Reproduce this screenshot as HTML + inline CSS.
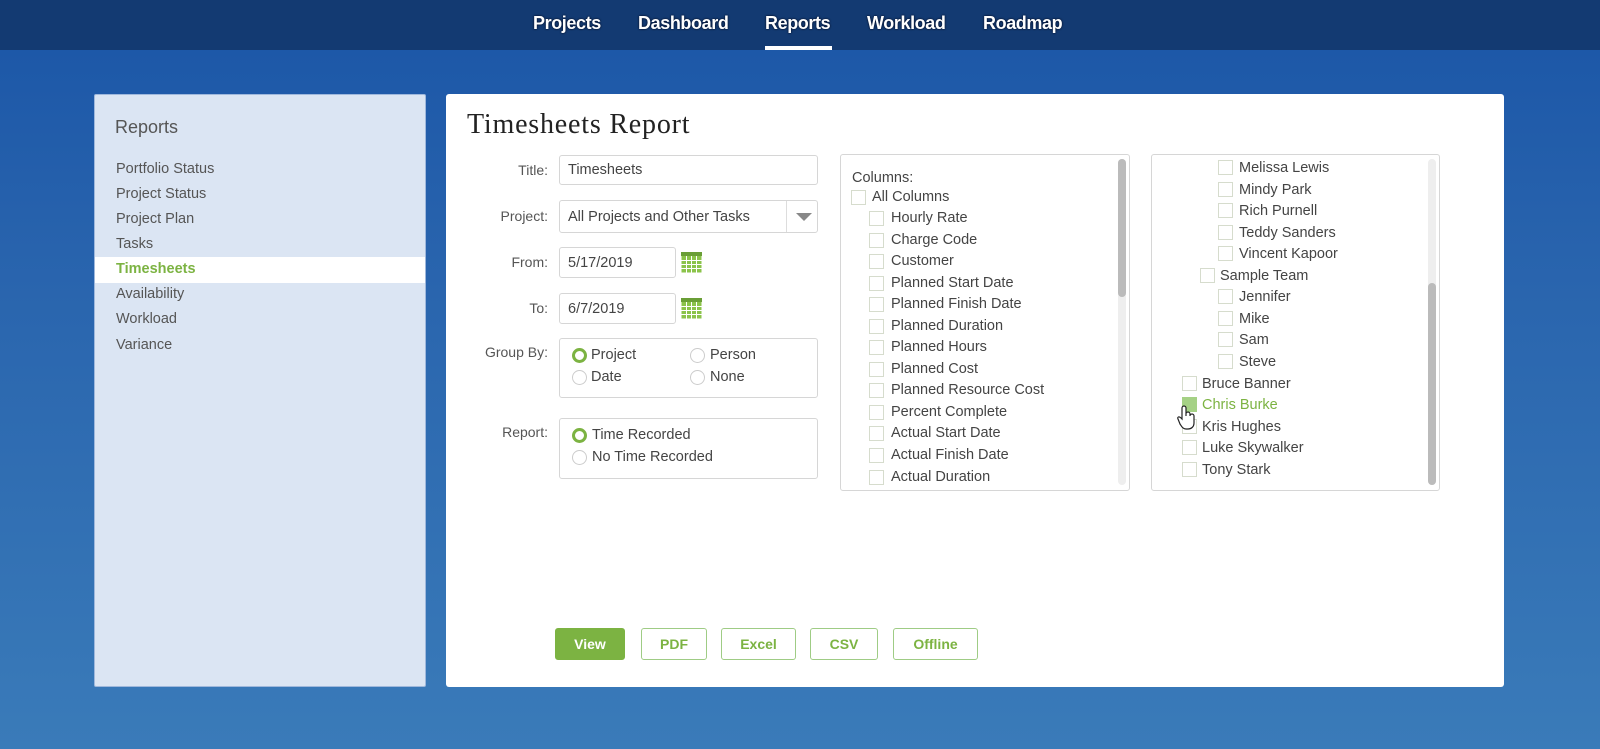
<!DOCTYPE html>
<html><head><meta charset="utf-8"><style>
*{margin:0;padding:0;box-sizing:border-box}
body{width:1600px;height:749px;overflow:hidden;position:relative;font-family:"Liberation Sans",sans-serif;background:linear-gradient(180deg,#1d58a8 50px,#2863ad 250px,#3a7bb9 749px);color:#555}
.a{position:absolute;white-space:nowrap}
.nav{position:absolute;left:0;top:0;width:1600px;height:50px;background:#133a72}
.nv{position:absolute;top:13px;color:#fff;font-weight:bold;font-size:18px;letter-spacing:-0.4px;text-shadow:0 0 2px #001}
.side{position:absolute;left:94px;top:94px;width:332px;height:593px;background:#dbe5f3;border:1px solid #9fb8dc;border-radius:2px}
.si{position:absolute;left:21px;font-size:14.5px;color:#555}
.main{position:absolute;left:446px;top:94px;width:1058px;height:593px;background:#fff;border-radius:3px}
.lbl{position:absolute;right:0;font-size:14px;color:#555;text-align:right}
.box{position:absolute;border:1px solid #d6d6d6;border-radius:3px;background:#fff}
.t{font-size:14.5px;color:#444}
.cb{position:absolute;width:15px;height:15px;border:1px solid #d6dccd;background:#fff}
.rd{position:absolute;width:15px;height:15px;border-radius:50%;border:1px solid #ccc}
.rd.on{border:3px solid #7cb342}
.btn{position:absolute;top:628px;height:32px;border:1px solid #9fcc85;border-radius:3px;color:#7cb342;font-weight:bold;font-size:14px;text-align:center;line-height:30px;background:#fff}
</style></head><body>
<div class="nav"></div>
<div class="nv" style="left:533px">Projects</div>
<div class="nv" style="left:638px">Dashboard</div>
<div class="nv" style="left:765px">Reports</div>
<div class="nv" style="left:867px">Workload</div>
<div class="nv" style="left:983px">Roadmap</div>
<div class="a" style="left:765px;top:46px;width:67px;height:4px;background:#fff"></div>

<div class="side">
<div class="a" style="left:20px;top:22px;font-size:18px;color:#555">Reports</div>
<div class="si" style="top:66px">Portfolio Status</div>
<div class="si" style="top:91px">Project Status</div>
<div class="si" style="top:116px">Project Plan</div>
<div class="si" style="top:141px">Tasks</div>
<div class="a" style="left:0;top:162px;width:330px;height:26px;background:#fff"></div>
<div class="si" style="top:166px;color:#7cb342;font-weight:bold">Timesheets</div>
<div class="si" style="top:191px">Availability</div>
<div class="si" style="top:216px">Workload</div>
<div class="si" style="top:242px">Variance</div>
</div>

<div class="main"></div>
<div class="a" style="left:467px;top:109px;font-family:'Liberation Serif',serif;font-size:28px;letter-spacing:0.8px;color:#222">Timesheets Report</div>

<div class="a" style="left:440px;top:0;width:108px;height:600px">
<div class="lbl" style="top:162px">Title:</div>
<div class="lbl" style="top:208px">Project:</div>
<div class="lbl" style="top:254px">From:</div>
<div class="lbl" style="top:300px">To:</div>
<div class="lbl" style="top:344px">Group By:</div>
<div class="lbl" style="top:424px">Report:</div>
</div>
<div class="box" style="left:559px;top:155px;width:259px;height:30px"><span class="a t" style="left:8px;top:6px">Timesheets</span></div>
<div class="box" style="left:559px;top:200px;width:259px;height:33px"><span class="a t" style="left:8px;top:8px">All Projects and Other Tasks</span>
<div class="a" style="left:226px;top:0;width:1px;height:31px;background:#ddd"></div>
<div class="a" style="left:236px;top:12px;border-left:8px solid transparent;border-right:8px solid transparent;border-top:8px solid #888"></div></div>
<div class="box" style="left:559px;top:247px;width:117px;height:31px"><span class="a t" style="left:8px;top:7px">5/17/2019</span></div>
<div class="box" style="left:559px;top:293px;width:117px;height:31px"><span class="a t" style="left:8px;top:7px">6/7/2019</span></div>
<svg class="a" style="left:681px;top:252px" width="21" height="21"><rect x="0.5" y="0.5" width="20" height="20" fill="#8bc34a"/><rect x="0" y="0" width="21" height="4" fill="#6a9e36"/><g stroke="#fff" stroke-width="1"><path d="M5.5 4V21M10.5 4V21M15.5 4V21M0 8.5H21M0 12.5H21M0 16.5H21"/></g></svg>
<svg class="a" style="left:681px;top:298px" width="21" height="21"><rect x="0.5" y="0.5" width="20" height="20" fill="#8bc34a"/><rect x="0" y="0" width="21" height="4" fill="#6a9e36"/><g stroke="#fff" stroke-width="1"><path d="M5.5 4V21M10.5 4V21M15.5 4V21M0 8.5H21M0 12.5H21M0 16.5H21"/></g></svg>

<div class="box" style="left:559px;top:338px;width:259px;height:60px"></div>
<div class="rd on" style="left:572px;top:348px"></div><span class="a t" style="left:591px;top:347px">Project</span>
<div class="rd" style="left:690px;top:348px"></div><span class="a t" style="left:710px;top:347px">Person</span>
<div class="rd" style="left:572px;top:370px"></div><span class="a t" style="left:591px;top:369px">Date</span>
<div class="rd" style="left:690px;top:370px"></div><span class="a t" style="left:710px;top:369px">None</span>

<div class="box" style="left:559px;top:418px;width:259px;height:61px"></div>
<div class="rd on" style="left:572px;top:428px"></div><span class="a t" style="left:592px;top:427px">Time Recorded</span>
<div class="rd" style="left:572px;top:450px"></div><span class="a t" style="left:592px;top:449px">No Time Recorded</span>

<div class="box" style="left:840px;top:154px;width:290px;height:337px;overflow:hidden">
<div class="a" style="left:277px;top:4px;width:8px;height:326px;background:#eee;border-radius:4px"></div>
<div class="a" style="left:277px;top:4px;width:8px;height:138px;background:#bbb;border-radius:4px"></div>
<span class="a t" style="left:11px;top:15px">Columns:</span>
<div class="cb" style="left:10px;top:35px"></div><span class="a t" style="left:31px;top:34px">All Columns</span>
</div>
<div class="a" style="left:0;top:0">
<div class="cb" style="left:869px;top:211px"></div><span class="a t" style="left:891px;top:210px">Hourly Rate</span>
<div class="cb" style="left:869px;top:233px"></div><span class="a t" style="left:891px;top:232px">Charge Code</span>
<div class="cb" style="left:869px;top:254px"></div><span class="a t" style="left:891px;top:253px">Customer</span>
<div class="cb" style="left:869px;top:276px"></div><span class="a t" style="left:891px;top:275px">Planned Start Date</span>
<div class="cb" style="left:869px;top:297px"></div><span class="a t" style="left:891px;top:296px">Planned Finish Date</span>
<div class="cb" style="left:869px;top:319px"></div><span class="a t" style="left:891px;top:318px">Planned Duration</span>
<div class="cb" style="left:869px;top:340px"></div><span class="a t" style="left:891px;top:339px">Planned Hours</span>
<div class="cb" style="left:869px;top:362px"></div><span class="a t" style="left:891px;top:361px">Planned Cost</span>
<div class="cb" style="left:869px;top:383px"></div><span class="a t" style="left:891px;top:382px">Planned Resource Cost</span>
<div class="cb" style="left:869px;top:405px"></div><span class="a t" style="left:891px;top:404px">Percent Complete</span>
<div class="cb" style="left:869px;top:426px"></div><span class="a t" style="left:891px;top:425px">Actual Start Date</span>
<div class="cb" style="left:869px;top:448px"></div><span class="a t" style="left:891px;top:447px">Actual Finish Date</span>
<div class="cb" style="left:869px;top:470px"></div><span class="a t" style="left:891px;top:469px">Actual Duration</span>
</div>

<div class="box" style="left:1151px;top:154px;width:289px;height:337px">
<div class="a" style="left:276px;top:4px;width:8px;height:326px;background:#eee;border-radius:4px"></div>
<div class="a" style="left:276px;top:128px;width:8px;height:202px;background:#bbb;border-radius:4px"></div>
</div>
<div class="cb" style="left:1218px;top:160px"></div><span class="a t" style="left:1239px;top:160px">Melissa Lewis</span>
<div class="cb" style="left:1218px;top:182px"></div><span class="a t" style="left:1239px;top:182px">Mindy Park</span>
<div class="cb" style="left:1218px;top:203px"></div><span class="a t" style="left:1239px;top:203px">Rich Purnell</span>
<div class="cb" style="left:1218px;top:225px"></div><span class="a t" style="left:1239px;top:225px">Teddy Sanders</span>
<div class="cb" style="left:1218px;top:246px"></div><span class="a t" style="left:1239px;top:246px">Vincent Kapoor</span>
<div class="cb" style="left:1200px;top:268px"></div><span class="a t" style="left:1220px;top:268px">Sample Team</span>
<div class="cb" style="left:1218px;top:289px"></div><span class="a t" style="left:1239px;top:289px">Jennifer</span>
<div class="cb" style="left:1218px;top:311px"></div><span class="a t" style="left:1239px;top:311px">Mike</span>
<div class="cb" style="left:1218px;top:332px"></div><span class="a t" style="left:1239px;top:332px">Sam</span>
<div class="cb" style="left:1218px;top:354px"></div><span class="a t" style="left:1239px;top:354px">Steve</span>
<div class="cb" style="left:1182px;top:376px"></div><span class="a t" style="left:1202px;top:376px">Bruce Banner</span>
<div class="cb" style="left:1182px;top:397px;background:#a5d185;border-color:#a5d185"></div><span class="a t" style="left:1202px;top:397px;color:#7cb342">Chris Burke</span>
<div class="cb" style="left:1182px;top:419px"></div><span class="a t" style="left:1202px;top:419px">Kris Hughes</span>
<div class="cb" style="left:1182px;top:440px"></div><span class="a t" style="left:1202px;top:440px">Luke Skywalker</span>
<div class="cb" style="left:1182px;top:462px"></div><span class="a t" style="left:1202px;top:462px">Tony Stark</span>
<svg class="a" style="left:1176px;top:405px" width="20" height="26"><path d="M6 14V3a2 2 0 0 1 4 0v8 0-2a2 2 0 0 1 4 0v2a2 2 0 0 1 4 0v7c0 4-3 6-6 6H10c-3 0-4-2-6-5L2 14c-1-2 1-3 3-1z" fill="#fff" stroke="#222" stroke-width="1.2"/></svg>

<div class="btn" style="left:555px;width:70px;background:#7cb342;border-color:#7cb342;color:#fff">View</div>
<div class="btn" style="left:641px;width:66px">PDF</div>
<div class="btn" style="left:721px;width:75px">Excel</div>
<div class="btn" style="left:810px;width:68px">CSV</div>
<div class="btn" style="left:893px;width:85px">Offline</div>
</body></html>
